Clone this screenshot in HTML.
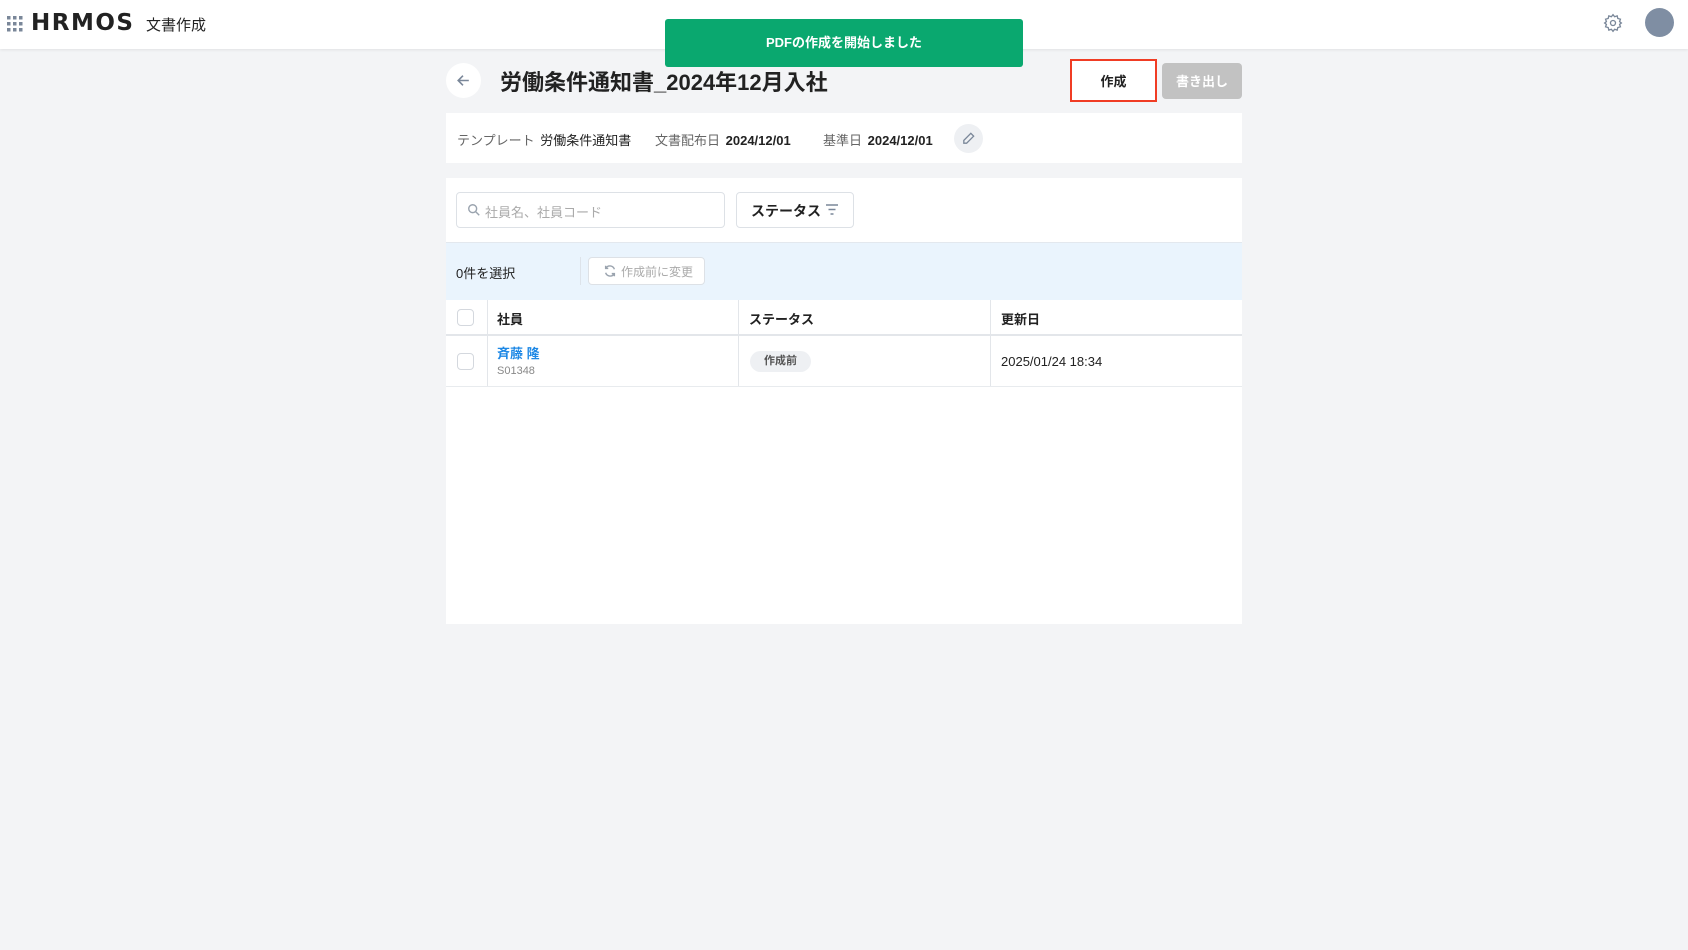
<!DOCTYPE html>
<html><head><meta charset="utf-8"><style>
*{box-sizing:border-box;margin:0;padding:0}
body{width:1688px;height:950px;background:#f3f4f6;font-family:"Liberation Sans","Noto Sans CJK JP",sans-serif;color:#222;position:relative;overflow:hidden;font-size:13px}
.abs{position:absolute}
.hdr{left:0;top:0;width:1688px;height:49px;background:#fff;box-shadow:0 1px 3px rgba(0,0,0,.08)}
.card{background:#fff}
.cb{width:17px;height:17px;border:1.5px solid #d4d8de;border-radius:4px;background:#fff}
</style></head><body>
<div class="abs hdr">
  <svg class="abs" style="left:7px;top:16px" width="16" height="16" viewBox="0 0 16 16" fill="#7a8799">
    <rect x="0" y="0" width="3.5" height="3.5"/><rect x="6" y="0" width="3.5" height="3.5"/><rect x="12" y="0" width="3.5" height="3.5"/>
    <rect x="0" y="6" width="3.5" height="3.5"/><rect x="6" y="6" width="3.5" height="3.5"/><rect x="12" y="6" width="3.5" height="3.5"/>
    <rect x="0" y="12" width="3.5" height="3.5"/><rect x="6" y="12" width="3.5" height="3.5"/><rect x="12" y="12" width="3.5" height="3.5"/>
  </svg>
  <div class="abs" style="left:31px;top:10px;font-size:23px;font-weight:bold;letter-spacing:1.5px;color:#222;font-family:'DejaVu Sans','Liberation Sans',sans-serif">HRMOS</div>
  <div class="abs" style="left:146px;top:14px;font-size:15px;color:#222">文書作成</div>
  <svg class="abs" style="left:1603px;top:13px" width="20" height="20" viewBox="0 0 24 24" fill="none" stroke="#7a8799" stroke-width="1.6"><circle cx="12" cy="12" r="3"/><path d="M12 2l2 2.5 3-1 .8 3.1 3.1.8-1 3L22 12l-2.1 1.6 1 3-3.1.8-.8 3.1-3-1L12 22l-2-2.5-3 1-.8-3.1-3.1-.8 1-3L2 12l2.1-1.6-1-3 3.1-.8.8-3.1 3 1z"/></svg>
  <div class="abs" style="left:1645px;top:8px;width:29px;height:29px;border-radius:50%;background:#7f8ea3"></div>
</div>
<div class="abs" style="left:665px;top:19px;width:358px;height:48px;background:#0aa86f;border-radius:3px;color:#fff;font-weight:bold;font-size:13px;text-align:center;line-height:48px">PDFの作成を開始しました</div>
<div class="abs" style="left:446px;top:63px;width:35px;height:35px;border-radius:50%;background:#fff"></div>
<svg class="abs" style="left:455px;top:72px" width="17" height="17" viewBox="0 0 16 16" fill="none" stroke="#7a8799" stroke-width="1.5"><path d="M13 8H3M7.5 3.5L3 8l4.5 4.5"/></svg>
<div class="abs" style="left:500px;top:65px;font-size:22px;font-weight:bold;color:#222">労働条件通知書_2024年12月入社</div>
<div class="abs" style="left:1070px;top:59px;width:87px;height:43px;border:2px solid #f03c24;background:#fff;text-align:center;line-height:41px;font-weight:bold;font-size:13px">作成</div>
<div class="abs" style="left:1162px;top:63px;width:80px;height:36px;background:#c2c2c2;border-radius:4px;color:#fff;text-align:center;line-height:38px;font-weight:bold;font-size:13px">書き出し</div>
<div class="abs card" style="left:446px;top:113px;width:796px;height:50px"></div>
<div class="abs" style="left:457px;top:130px;font-size:13px;color:#666">テンプレート <span style="color:#222;margin-left:2px">労働条件通知書</span></div>
<div class="abs" style="left:655px;top:130px;font-size:13px;color:#666">文書配布日 <span style="color:#222;font-weight:bold;margin-left:2px">2024/12/01</span></div>
<div class="abs" style="left:823px;top:130px;font-size:13px;color:#666">基準日 <span style="color:#222;font-weight:bold;margin-left:2px">2024/12/01</span></div>
<div class="abs" style="left:954px;top:124px;width:29px;height:29px;border-radius:50%;background:#eef0f3"></div>
<svg class="abs" style="left:961px;top:131px" width="15" height="15" viewBox="0 0 16 16" fill="none" stroke="#7a8799" stroke-width="1.4"><path d="M10.5 2.5l3 3L6 13H3v-3z"/></svg>
<div class="abs card" style="left:446px;top:178px;width:796px;height:446px"></div>
<div class="abs" style="left:456px;top:192px;width:269px;height:36px;border:1px solid #dde1e6;border-radius:4px;background:#fff"></div>
<svg class="abs" style="left:467px;top:203px" width="14" height="14" viewBox="0 0 16 16" fill="none" stroke="#9aa3ae" stroke-width="1.6"><circle cx="6.5" cy="6.5" r="4.5"/><path d="M10 10l4 4"/></svg>
<div class="abs" style="left:485px;top:202px;color:#aaa;font-size:13px">社員名、社員コード</div>
<div class="abs" style="left:736px;top:192px;width:118px;height:36px;border:1px solid #dde1e6;border-radius:4px;background:#fff"></div>
<div class="abs" style="left:751px;top:201px;font-weight:bold;font-size:14px">ステータス</div>
<svg class="abs" style="left:825px;top:203px" width="14" height="13" viewBox="0 0 14 13" stroke="#7a8799" stroke-width="1.5"><path d="M1 2h12M3.5 6.5h7M5.5 11h3"/></svg>
<div class="abs" style="left:446px;top:242px;width:796px;height:58px;background:#eaf4fd;border-top:1px solid #e3e8ee"></div>
<div class="abs" style="left:456px;top:263px;font-size:13px">0件を選択</div>
<div class="abs" style="left:580px;top:257px;width:1px;height:28px;background:#dde3ea"></div>
<div class="abs" style="left:588px;top:257px;width:117px;height:28px;border:1px solid #dde1e6;border-radius:4px;background:#fff;color:#aaa;font-size:12px;line-height:28px;padding-left:32px">作成前に変更</div>
<svg class="abs" style="left:603px;top:264px" width="14" height="14" viewBox="0 0 16 16" fill="none" stroke="#9aa3ae" stroke-width="1.6"><path d="M13 6A5.5 5.5 0 0 0 3 5M3 2v3h3M3 10a5.5 5.5 0 0 0 10 1M13 14v-3h-3"/></svg>
<div class="abs" style="left:446px;top:300px;width:796px;height:36px;border-bottom:2px solid #e3e6ea;background:#fff"></div>
<div class="abs" style="left:446px;top:386px;width:796px;height:1px;background:#e8ebee"></div>
<div class="abs" style="left:487px;top:300px;width:1px;height:86px;background:#e3e6ea"></div>
<div class="abs" style="left:738px;top:300px;width:1px;height:86px;background:#e3e6ea"></div>
<div class="abs" style="left:990px;top:300px;width:1px;height:86px;background:#e3e6ea"></div>
<div class="abs cb" style="left:457px;top:309px"></div>
<div class="abs cb" style="left:457px;top:353px"></div>
<div class="abs" style="left:497px;top:309px;font-weight:bold;font-size:13px">社員</div>
<div class="abs" style="left:749px;top:309px;font-weight:bold;font-size:13px">ステータス</div>
<div class="abs" style="left:1001px;top:309px;font-weight:bold;font-size:13px">更新日</div>
<div class="abs" style="left:497px;top:343px;color:#1e88e5;font-weight:bold;font-size:13px">斉藤 隆</div>
<div class="abs" style="left:497px;top:365px;color:#888;font-size:11px">S01348</div>
<div class="abs" style="left:750px;top:351px;width:61px;height:21px;border-radius:11px;background:#eef0f3;color:#555;font-size:11px;font-weight:bold;text-align:center;line-height:21px">作成前</div>
<div class="abs" style="left:1001px;top:354px;font-size:13px">2025/01/24 18:34</div>
</body></html>
